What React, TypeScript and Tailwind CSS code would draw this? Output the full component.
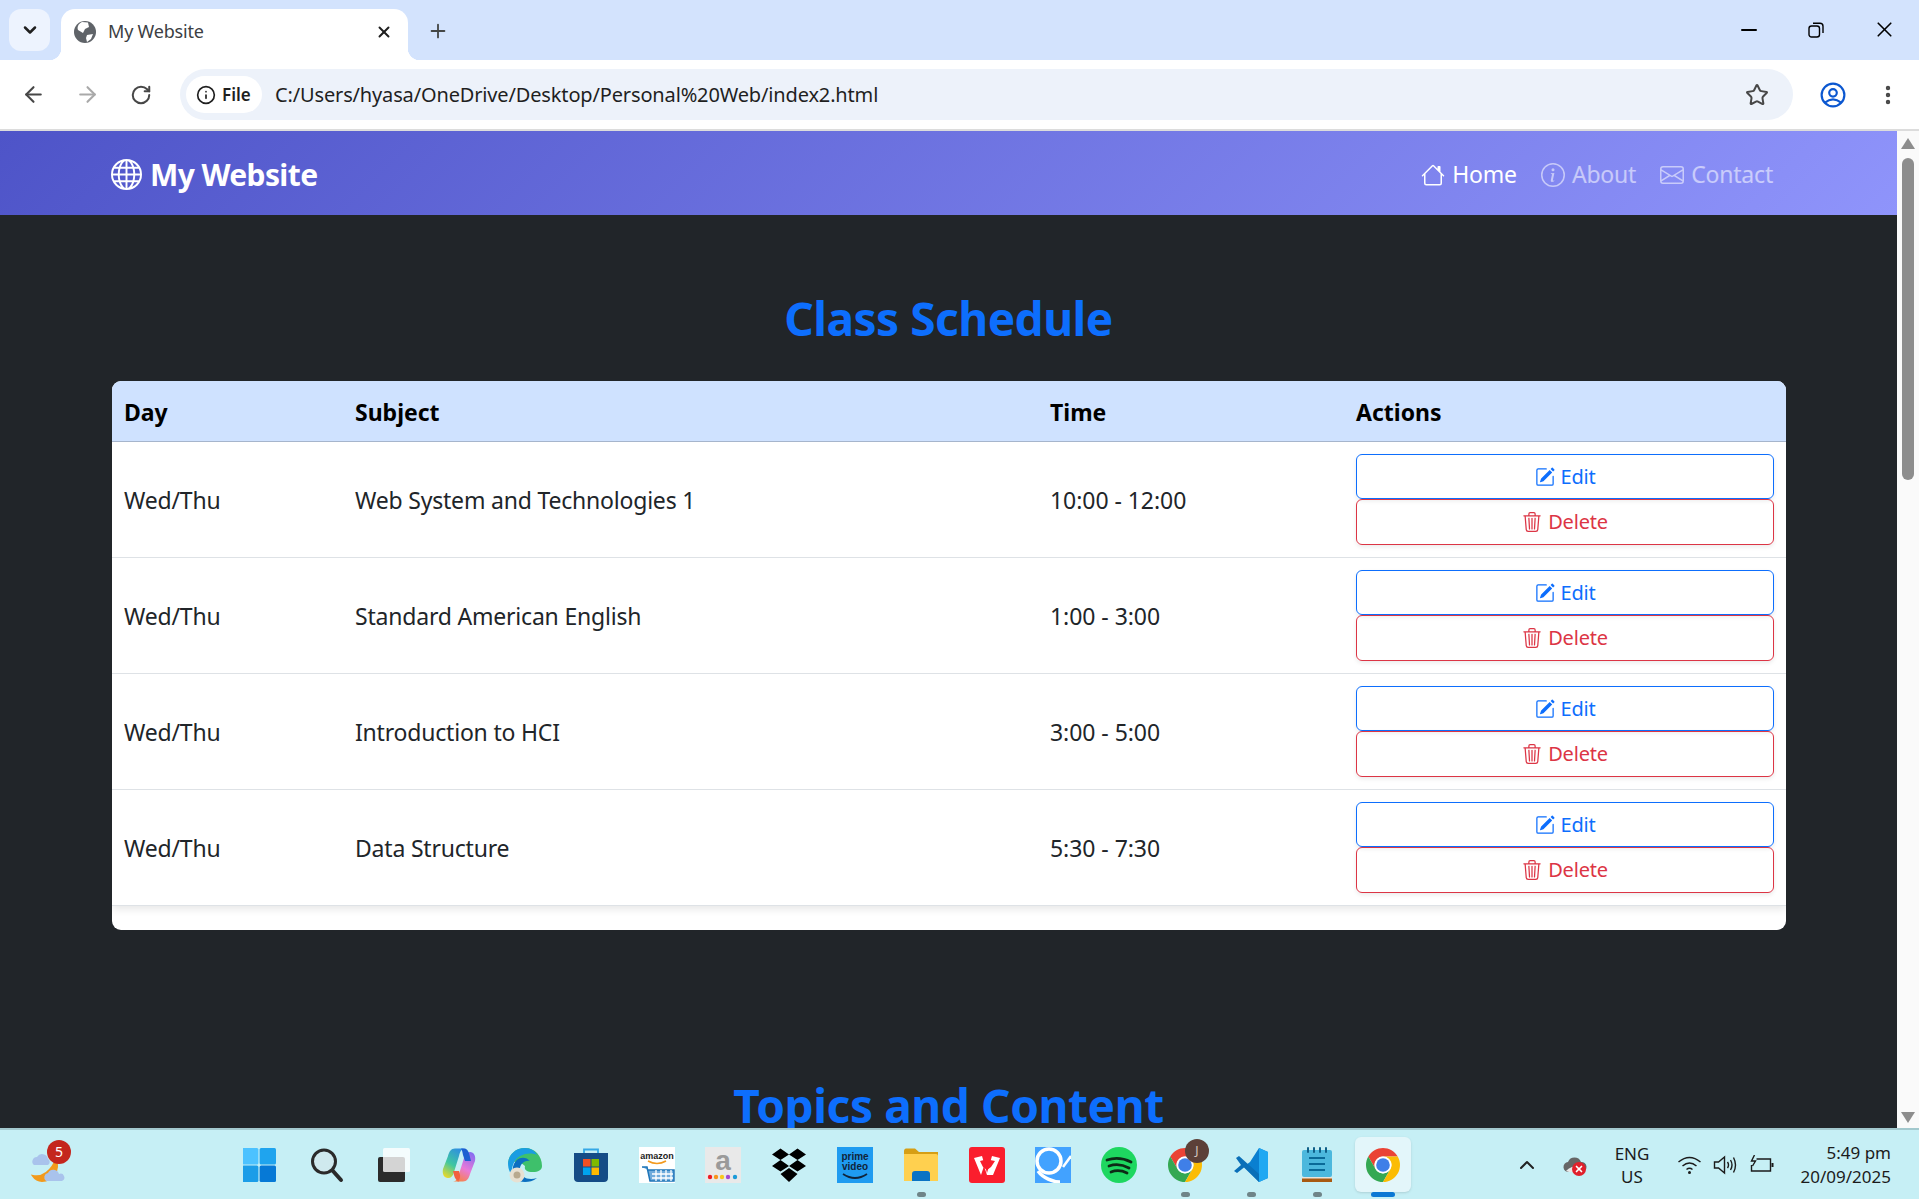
import { ArrowLeft, ArrowRight, ChevronDown, ChevronUp, Info, Minus, MoreVertical, Plus, RotateCw, Star, X } from 'lucide-react'
import { BsEnvelope, BsGlobe, BsHouse, BsInfoCircle, BsPencilSquare, BsTrash3 } from 'react-icons/bs'

const rows = [
  { day: 'Wed/Thu', subject: 'Web System and Technologies 1', time: '10:00 - 12:00' },
  { day: 'Wed/Thu', subject: 'Standard American English', time: '1:00 - 3:00' },
  { day: 'Wed/Thu', subject: 'Introduction to HCI', time: '3:00 - 5:00' },
  { day: 'Wed/Thu', subject: 'Data Structure', time: '5:30 - 7:30' },
]

function ChromeLogo() {
  return (
    <svg viewBox="0 0 36 36" className="w-9 h-9">
      <path d="M3.28 9.5A17 17 0 0 1 32.72 9.5H18A8.5 8.5 0 0 0 10.64 22.25Z" fill="#ea4335" />
      <path d="M3.28 9.5A17 17 0 0 0 18 35L25.36 22.25A8.5 8.5 0 0 1 10.64 22.25Z" fill="#34a853" />
      <path d="M32.72 9.5H18A8.5 8.5 0 0 1 25.36 22.25L18 35A17 17 0 0 0 32.72 9.5Z" fill="#fbbc04" />
      <circle cx="18" cy="18" r="8.5" fill="#fff" />
      <circle cx="18" cy="18" r="6.8" fill="#3f7fe8" />
    </svg>
  )
}

function TaskIcon({ name }: { name: string }) {
  const box = 'w-9 h-9'
  switch (name) {
    case 'windows':
      return (
        <svg viewBox="0 0 36 36" className={box}>
          <rect x="-1" y="1" width="16.4" height="16.4" rx="1.5" fill="#4cc2ff" />
          <rect x="16.6" y="1" width="16.4" height="16.4" rx="1.5" fill="#1fa4ee" />
          <rect x="-1" y="18.6" width="16.4" height="16.4" rx="1.5" fill="#1b9de8" />
          <rect x="16.6" y="18.6" width="16.4" height="16.4" rx="1.5" fill="#0679d6" />
        </svg>
      )
    case 'search':
      return (
        <svg viewBox="0 0 36 36" className={box}>
          <circle cx="15" cy="14.5" r="11.5" fill="#cfe9ee" stroke="#2a2a2a" strokeWidth="3" />
          <path d="M23.5 23.5L32 33" stroke="#2a2a2a" strokeWidth="4" strokeLinecap="round" />
        </svg>
      )
    case 'taskview':
      return (
        <svg viewBox="0 0 36 36" className={box}>
          <rect x="3" y="10" width="27" height="25" rx="2" fill="#2b2b2b" />
          <rect x="8" y="1" width="27" height="24" rx="1.5" fill="#fff" fillOpacity="0.8" />
        </svg>
      )
    case 'copilot':
      return (
        <svg viewBox="0 0 36 36" className={box}>
          <defs>
            <linearGradient id="copilotLeft" x1="0.7" y1="0" x2="0.2" y2="1">
              <stop offset="0" stopColor="#2f8fe0" />
              <stop offset="0.55" stopColor="#3fc7a0" />
              <stop offset="1" stopColor="#e8d92c" />
            </linearGradient>
            <linearGradient id="copilotRight" x1="0.7" y1="0" x2="0.3" y2="1">
              <stop offset="0" stopColor="#8a6cf0" />
              <stop offset="0.55" stopColor="#e87ad8" />
              <stop offset="1" stopColor="#f6824a" />
            </linearGradient>
          </defs>
          <path d="M14 1.5H24C20 2 19 5 18 9L13 25C12 29 10 31 7 31C3 31 1 27 2 22L7 9C8 5 10 1.5 14 1.5Z" fill="url(#copilotLeft)" />
          <path d="M22 34.5H12C16 34 17 31 18 27L23 11C24 7 26 5 29 5C33 5 35 9 34 14L29 27C28 31 26 34.5 22 34.5Z" fill="url(#copilotRight)" />
          <path d="M20 1.5H23C26 1.5 27.5 4 28.5 8L30 14L24 14L22 8C21.5 5 21 3 20 1.5Z" fill="#1d5fd1" />
          <path d="M12 34.5H20C16 34.5 14 32 13 28L12 24L18 24L19 28C19.5 31 18 34 16 34.5Z" fill="#f2603f" />
        </svg>
      )
    case 'edge':
      return (
        <svg viewBox="0 0 36 36" className={box}>
          <path d="M1 16C2 7 9 1 18 1C28 1 35 9 35 19C35 23 31 25 26 25C20 25 17 23 18 19C13 14 5 14 1 16Z" fill="#3ec06b" />
          <path d="M1 16C2 7 9 1 18 1C24 1 28 4 30 8C24 5 10 6 6 18C5 21 4 24 5 28C2 25 1 20 1 16Z" fill="#1b9de2" />
          <path d="M6 20C8 10 18 8 23 14C17 13 12 18 13 24C14 30 21 34 30 31C26 34 22 35 18 35C10 35 4 29 6 20Z" fill="#0c6fc0" />
          <circle cx="10" cy="28" r="7.5" fill="#e7e0d2" />
          <circle cx="10" cy="28" r="3.5" fill="#b8a98f" />
        </svg>
      )
    case 'store':
      return (
        <svg viewBox="0 0 36 36" className={box}>
          <path d="M11 6V2.5H25V6" fill="none" stroke="#35a8e6" strokeWidth="1.8" />
          <path d="M1 6H35V31C35 33.5 33.5 35 31 35H5C2.5 35 1 33.5 1 31Z" fill="#154c86" />
          <rect x="10" y="12" width="7.5" height="7.5" fill="#f25022" />
          <rect x="18.5" y="12" width="7.5" height="7.5" fill="#7fba00" />
          <rect x="10" y="20.5" width="7.5" height="7.5" fill="#00a4ef" />
          <rect x="18.5" y="20.5" width="7.5" height="7.5" fill="#ffb900" />
        </svg>
      )
    case 'amazon':
      return (
        <svg viewBox="0 0 36 36" className={box}>
          <rect width="36" height="36" fill="#fff" />
          <text x="18" y="12" textAnchor="middle" fontSize="9" fontWeight="700" fontFamily="Liberation Sans, sans-serif" fill="#222">amazon</text>
          <path d="M9 14Q18 19 27 14" fill="none" stroke="#f39a1f" strokeWidth="1.6" />
          <path d="M3 20H8L11 34H35V23H9" fill="#3f8fd0" fillOpacity="0.75" stroke="#1f75b8" strokeWidth="1.5" />
          <path d="M13 27H34M13 31H34M17 23V34M22 23V34M27 23V34M32 23V34" stroke="#fff" strokeWidth="1.3" />
        </svg>
      )
    case 'appstore':
      return (
        <svg viewBox="0 0 36 36" className={box}>
          <rect width="36" height="36" fill="#e9e9e9" />
          <text x="18" y="23" textAnchor="middle" fontSize="28" fontWeight="700" fontFamily="Liberation Sans, sans-serif" fill="#9a9a9a">a</text>
          <circle cx="5" cy="30" r="2.2" fill="#ee1c25" />
          <circle cx="11" cy="30" r="2.2" fill="#f7941d" />
          <circle cx="17" cy="30" r="2.2" fill="#f7c81d" />
          <circle cx="23" cy="30" r="2.2" fill="#a24bd0" />
          <circle cx="30" cy="30" r="2.2" fill="#1d9bd8" />
        </svg>
      )
    case 'dropbox':
      return (
        <svg viewBox="0 0 36 36" className={box}>
          <path d="M9.5 1.5L18 7.5L9.5 13L1 7.5ZM26.5 1.5L35 7.5L26.5 13L18 7.5ZM9.5 13L18 19L9.5 24.5L1 19ZM26.5 13L35 19L26.5 24.5L18 19ZM18 21L26.5 27L18 35L9.5 27Z" fill="#000" />
        </svg>
      )
    case 'prime':
      return (
        <svg viewBox="0 0 36 36" className={box}>
          <rect width="36" height="36" fill="#1f9bf0" />
          <text x="18" y="13" textAnchor="middle" fontSize="10" fontWeight="700" fontFamily="Liberation Sans, sans-serif" fill="#10243a">prime</text>
          <text x="18" y="23" textAnchor="middle" fontSize="10" fontWeight="700" fontFamily="Liberation Sans, sans-serif" fill="#10243a">video</text>
          <path d="M6 27Q18 35 30 27" fill="none" stroke="#10243a" strokeWidth="1.8" />
        </svg>
      )
    case 'files':
      return (
        <svg viewBox="0 0 36 36" className={box}>
          <path d="M1 4C1 2.5 2 1.5 3 1.5H12L16 5H35V14H1Z" fill="#d69e14" />
          <path d="M1 7H33C34.5 7 35 8 35 9V34H1Z" fill="#ffd04f" />
          <path d="M9 27C9 25 10 24 12 24H24C26 24 27 25 27 27V34H9Z" fill="#0a73c4" />
        </svg>
      )
    case 'wps':
      return (
        <svg viewBox="0 0 36 36" className={box}>
          <rect width="36" height="36" rx="3" fill="#fa1e2d" />
          <path d="M5 11L13 9L18 26L23 9L31 11L24 28H18L15 19L12 28Z" fill="#fff" />
          <path d="M11 14L15 13L18 20L21 13L26 14L22 20L18 23L14 20Z" fill="#fa1e2d" />
        </svg>
      )
    case 'q':
      return (
        <svg viewBox="0 0 36 36" className={box}>
          <rect width="36" height="36" fill="#42a2ff" />
          <circle cx="14" cy="14" r="12" fill="none" stroke="#fff" strokeWidth="3.5" />
          <path d="M3 24C8 31 18 35 25 35" fill="none" stroke="#fff" strokeWidth="3.5" />
          <path d="M28 20L36 9" stroke="#fff" strokeWidth="2.5" />
        </svg>
      )
    case 'spotify':
      return (
        <svg viewBox="0 0 36 36" className={box}>
          <circle cx="18" cy="18" r="18" fill="#1ed760" />
          <path d="M6 13Q18 9 30 15M8 19Q18 15.5 28 21M10 25Q18 22 26 26" fill="none" stroke="#0d2a16" strokeWidth="2.8" strokeLinecap="round" />
        </svg>
      )
    case 'vscode':
      return (
        <svg viewBox="0 0 36 36" className={box}>
          <path d="M26 1L35 5V31L26 35L11 19.5L17 15Z" fill="#0a7fd0" />
          <path d="M26 1L35 5V31L26 35Z" fill="#1fa8f2" />
          <path d="M3 11L6 9L26 27V35L11 20.5L4 26L1 24L8 18Z" fill="#0a6fb8" />
        </svg>
      )
    case 'notepad':
      return (
        <svg viewBox="0 0 36 36" className={box}>
          <rect x="3" y="3" width="30" height="27" rx="2" fill="#4cb8dd" />
          <path d="M3 30H33V35H3Z" fill="#a85a12" />
          <path d="M3 30H33V31.5H3Z" fill="#e9e4da" />
          <path d="M9 1V5M15 1V5M21 1V5M27 1V5" stroke="#0f5f88" strokeWidth="2" strokeLinecap="round" />
          <path d="M10 11H26M10 17H26M10 23H26" stroke="#0a6a98" strokeWidth="2" />
        </svg>
      )
    default:
      return <ChromeLogo />
  }
}

const taskIcons = [
  { name: 'windows' },
  { name: 'search' },
  { name: 'taskview' },
  { name: 'copilot' },
  { name: 'edge' },
  { name: 'store' },
  { name: 'amazon' },
  { name: 'appstore' },
  { name: 'dropbox' },
  { name: 'prime' },
  { name: 'files', open: true },
  { name: 'wps' },
  { name: 'q' },
  { name: 'spotify' },
  { name: 'chrome', open: true, badge: true },
  { name: 'vscode', open: true },
  { name: 'notepad', open: true },
  { name: 'chrome', active: true },
]

function Taskbar() {
  return (
    <div className="h-[71px] shrink-0 flex items-center bg-[#c6eff5] border-t-2 border-[#a3c9ce] font-['Noto_Sans',sans-serif] text-[#1b1b1b]">
      {/* weather */}
      <div className="w-[228px] shrink-0 pl-[30px]">
        <div className="relative w-10 h-10">
          <svg viewBox="0 0 40 40" className="w-10 h-10">
            <path d="M26 14C30 26 22 36 12 36C8 36 5 34 3 31C12 33 22 26 26 14Z" fill="#f29a1c" stroke="#f29a1c" strokeWidth="2" />
            <path d="M4 20a4.5 4.5 0 0 1 3-8a6 6 0 0 1 11 2a3.5 3.5 0 0 1 0 6Z" fill="#a9c3ec" />
            <path d="M16 36a4.5 4.5 0 0 1 2-8a6 6 0 0 1 11 1a3.5 3.5 0 0 1 3 7Z" fill="#a9c3ec" />
          </svg>
          <span className="absolute left-[17px] -top-[5px] w-[24px] h-[24px] rounded-full bg-[#c4261d] text-white text-[14px] flex items-center justify-center">5</span>
        </div>
      </div>

      <div className="flex">
        {taskIcons.map((icon, i) => (
          <div key={i} className="relative w-[66px] h-[69px] flex items-center justify-center">
            {icon.active && <div className="absolute left-[5px] right-[5px] top-[7px] bottom-[7px] rounded-[6px] bg-[#e3f6fa] shadow-sm" />}
            <div className="relative">
              <TaskIcon name={icon.name} />
              {icon.badge && (
                <span className="absolute left-[18px] -top-[8px] w-6 h-6 rounded-full bg-[#5c4038] text-[#d8c8c0] text-[12px] flex items-center justify-center">J</span>
              )}
            </div>
            {icon.open && <span className="absolute bottom-[2px] left-[29px] w-[9px] h-[5px] rounded-full bg-[#6f8488]" />}
            {icon.active && <span className="absolute bottom-[2px] left-[21px] w-6 h-[5px] rounded-full bg-[#0b78d4]" />}
          </div>
        ))}
      </div>

      {/* tray */}
      <div className="flex-1 flex items-center relative h-full">
        <ChevronUp className="w-6 h-6 ml-[99px] text-[#222]" strokeWidth={2} />
        <div className="relative ml-[24px]">
          <svg viewBox="0 0 24 20" className="w-6 h-5">
            <path d="M6 17a5 5 0 0 1-1-10a7 7 0 0 1 13 0a5 5 0 0 1 1 10Z" fill="#666" />
            <path d="M3 16Q10 9 21 12Q21 17 16 17H6Z" fill="#e8e8e8" />
          </svg>
          <span className="absolute left-[9px] top-[7px] w-[14px] h-[14px] rounded-full bg-[#e0202c] text-white flex items-center justify-center">
            <X className="w-[10px] h-[10px]" strokeWidth={4} />
          </span>
        </div>
        <div className="ml-[25px] text-[17px] leading-[23px] text-center w-[40px]">
          <div>ENG</div>
          <div>US</div>
        </div>
        <div className="flex items-center ml-[25px] gap-[11px]">
          <svg viewBox="0 0 24 20" fill="none" stroke="#1b1b1b" strokeWidth="1.5" className="w-[25px] h-[20px]">
            <path d="M1 7Q12 -2 23 7M5 11Q12 5 19 11M9 14.5Q12 12 15 14.5" />
            <circle cx="12" cy="17.5" r="1.5" fill="#1b1b1b" stroke="none" />
          </svg>
          <svg viewBox="0 0 24 20" fill="none" stroke="#1b1b1b" strokeWidth="1.4" className="w-[25px] h-[20px]">
            <path d="M1 7H5L11 2V18L5 13H1Z" />
            <path d="M14 7Q16 10 14 13M17 5Q20 10 17 15M20 2.5Q24 10 20 17.5" />
          </svg>
          <svg viewBox="0 0 24 20" fill="none" stroke="#1b1b1b" strokeWidth="1.4" className="w-[25px] h-[20px]">
            <path d="M7 4H21V16H2V10" />
            <path d="M23 8V12" strokeWidth="2" />
            <path d="M5 0L2 6H6L3 11" />
          </svg>
        </div>
        <div className="ml-auto mr-[28px] text-[17px] leading-[24px] text-right">
          <div>5:49 pm</div>
          <div>20/09/2025</div>
        </div>
      </div>
    </div>
  )
}

function BrowserChrome() {
  return (
    <div className="shrink-0 font-['Noto_Sans',sans-serif]">
      {/* tab strip */}
      <div className="h-[60px] bg-[#d3e3fd] flex items-start relative">
        <div className="ml-[9px] mt-[9px] w-[41px] h-[42px] rounded-[12px] bg-[#edf3fe] flex items-center justify-center">
          <ChevronDown className="w-5 h-5 text-[#1f1f1f]" strokeWidth={3} />
        </div>
        <div className="relative ml-[11px] mt-[9px] w-[347px] h-[51px] bg-white rounded-t-[14px] flex items-center pl-[13px] pr-[15px] pb-[6px]">
          <span className="absolute -left-[12px] bottom-0 w-3 h-3 bg-[radial-gradient(circle_at_0_0,#d3e3fd_12px,#fff_12.5px)]" />
          <span className="absolute -right-[12px] bottom-0 w-3 h-3 bg-[radial-gradient(circle_at_100%_0,#d3e3fd_12px,#fff_12.5px)]" />
          <svg viewBox="0 0 22 22" className="w-[22px] h-[22px]">
            <circle cx="11" cy="11" r="11" fill="#5f6368" />
            <path d="M8 1C4 3 3 6 4 9L9 12L11 8L15 6L14 1.5ZM13 14L19 13L17 18L13 21L12 17Z" fill="#fff" />
          </svg>
          <span className="ml-[12px] text-[18px] text-[#3c4043] tracking-[-0.2px]">My Website</span>
          <X className="ml-auto w-[18px] h-[18px] text-[#1f1f1f]" strokeWidth={2.6} />
        </div>
        <Plus className="ml-[19px] mt-[20px] w-[22px] h-[22px] text-[#444746]" strokeWidth={2} />
        <div className="ml-auto flex items-center mt-[17px] text-black">
          <Minus className="w-6 h-6 mr-[47px]" strokeWidth={2} />
          <svg viewBox="0 0 16 16" fill="none" stroke="currentColor" strokeWidth="1.4" className="w-4 h-4 mr-[48px]">
            <rect x="1" y="4" width="10.5" height="11" rx="2.5" />
            <path d="M5 1.2H12A3 3 0 0 1 15 4.2V11" />
          </svg>
          <X className="w-[25px] h-[25px] mr-[22px]" strokeWidth={1.6} />
        </div>
      </div>

      {/* toolbar */}
      <div className="h-[71px] bg-white rounded-tl-[12px] rounded-tr-[12px] border-b-2 border-[#dcdcdc] flex items-center">
        <ArrowLeft className="ml-[21px] w-[25px] h-[25px] text-[#474747]" strokeWidth={2} />
        <ArrowRight className="ml-[29px] w-[25px] h-[25px] text-[#a9a9a9]" strokeWidth={2} />
        <RotateCw className="ml-[30px] w-[22px] h-[22px] text-[#474747]" strokeWidth={2.2} />
        <div className="ml-[28px] w-[1613px] h-[51px] rounded-full bg-[#edf2fa] flex items-center pl-[6px] pr-[24px]">
          <div className="w-[76px] h-[37px] rounded-full bg-white flex items-center pl-[10px] gap-[6px]">
            <Info className="w-[20px] h-[20px] text-[#1f1f1f]" strokeWidth={2} />
            <span className="text-[17px] font-semibold text-[#1f1f1f]">File</span>
          </div>
          <span className="ml-[13px] text-[20px] text-[#1f1f1f] tracking-[-0.15px]">C:/Users/hyasa/OneDrive/Desktop/Personal%20Web/index2.html</span>
          <Star className="ml-auto w-[24px] h-[24px] text-[#474747]" strokeWidth={2} />
        </div>
        <svg viewBox="0 0 24 24" fill="none" stroke="#0b57d0" strokeWidth="2" className="ml-[27px] w-[26px] h-[26px]">
          <circle cx="12" cy="12" r="10.5" />
          <circle cx="12" cy="10" r="3.5" />
          <path d="M4.5 19Q12 13 19.5 19" />
        </svg>
        <MoreVertical className="ml-[30px] w-[24px] h-[24px] text-[#474747]" strokeWidth={2.4} />
      </div>
    </div>
  )
}

function Scrollbar() {
  return (
    <div className="w-[22px] shrink-0 bg-[#fafafa] flex flex-col items-center">
      <div className="mt-[7px] w-0 h-0 border-l-[7px] border-r-[7px] border-b-[11px] border-l-transparent border-r-transparent border-b-[#8d8d8d]" />
      <div className="mt-[9px] w-[12px] h-[322px] rounded-full bg-[#8d8d8d]" />
      <div className="mt-auto mb-[5px] w-0 h-0 border-l-[7px] border-r-[7px] border-t-[11px] border-l-transparent border-r-transparent border-t-[#8d8d8d]" />
    </div>
  )
}

function Navbar() {
  return (
    <nav className="h-[84px] shrink-0 bg-[linear-gradient(135deg,#4e54c8,#8f94fb)] flex items-center pl-[111px] pr-[124px]">
      <a className="flex items-center gap-[8px] text-white text-[30px] font-bold pt-[2px]">
        <BsGlobe className="w-[31px] h-[31px]" />
        <span className="tracking-[-0.6px]">My Website</span>
      </a>
      <div className="ml-auto flex items-center gap-[24px] text-[23px] tracking-[-0.2px] pt-[3px]">
        <a className="flex items-center gap-[7px] text-white">
          <BsHouse className="w-[24px] h-[24px]" />
          <span>Home</span>
        </a>
        <a className="flex items-center gap-[7px] text-white/55">
          <BsInfoCircle className="w-[24px] h-[24px]" />
          <span>About</span>
        </a>
        <a className="flex items-center gap-[7px] text-white/55">
          <BsEnvelope className="w-[24px] h-[24px]" />
          <span>Contact</span>
        </a>
      </div>
    </nav>
  )
}

function ScheduleTable() {
  return (
    <div className="ml-[112px] mr-[111px] bg-white rounded-[9px] pb-[24px] overflow-hidden">
      <table className="w-full border-collapse table-fixed shadow-[0_3px_8px_rgba(0,0,0,0.1)]">
        <thead>
          <tr className="h-[60px] bg-[#cfe2ff] border-b border-[#a6b5cc] text-black text-[23px] font-bold text-left">
            <th className="w-[231px] px-3 pt-[2px]">Day</th>
            <th className="w-[695px] px-3 pt-[2px]">Subject</th>
            <th className="w-[306px] px-3 pt-[2px]">Time</th>
            <th className="px-3 pt-[2px]">Actions</th>
          </tr>
        </thead>
        <tbody>
          {rows.map((row, i) => (
            <tr key={i} className="h-[116px] border-b border-[#dee2e6] text-[23px] tracking-[-0.2px] text-[#212529]">
              <td className="px-3 pt-[2px]">{row.day}</td>
              <td className="px-3 pt-[2px]">{row.subject}</td>
              <td className="px-3 pt-[2px] tracking-[-0.05px]">{row.time}</td>
              <td className="px-3">
                <button type="button" className="w-full h-[45px] flex items-center justify-center gap-[6px] rounded-[6px] border border-[#0d6efd] text-[#0d6efd] text-[20px] pt-[1px] shadow-[0_2px_4px_rgba(0,0,0,0.08)]">
                  <BsPencilSquare className="w-[20px] h-[20px]" />
                  Edit
                </button>
                <button type="button" className="w-full h-[46px] flex items-center justify-center gap-[6px] rounded-[6px] border border-[#dc3545] text-[#dc3545] text-[20px] pt-[1px] shadow-[0_2px_4px_rgba(0,0,0,0.08)]">
                  <BsTrash3 className="w-[20px] h-[20px]" />
                  Delete
                </button>
              </td>
            </tr>
          ))}
        </tbody>
      </table>
    </div>
  )
}

export default function App() {
  return (
    <div className="h-screen overflow-hidden flex flex-col">
      <BrowserChrome />
      <div className="flex-1 min-h-0 flex">
        <div className="flex-1 min-w-0 overflow-hidden bg-[#212529] font-['Noto_Sans',sans-serif]">
          <Navbar />
          <h2 className="mt-[74px] mb-[34px] h-[58px] leading-[58px] text-center text-[46px] tracking-[-0.5px] font-bold text-[#0d6efd]">Class Schedule</h2>
          <ScheduleTable />
          <h2 className="mt-[146px] h-[58px] leading-[58px] text-center text-[46px] tracking-[-0.4px] font-bold text-[#0d6efd]">Topics and Content</h2>
        </div>
        <Scrollbar />
      </div>
      <Taskbar />
    </div>
  )
}
